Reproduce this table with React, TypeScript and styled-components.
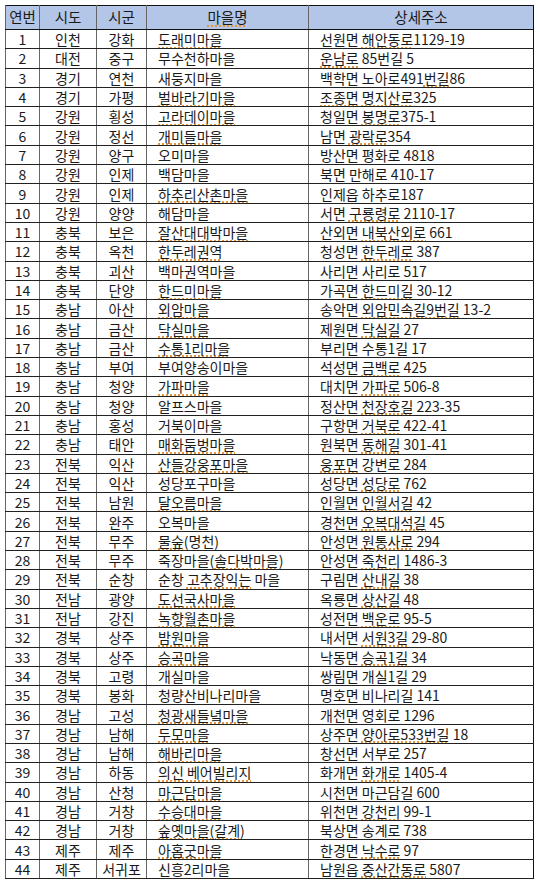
import styled, { createGlobalStyle } from "styled-components";

const GlobalStyle = createGlobalStyle`
  html, body {
    margin: 0;
    padding: 0;
    background: #ffffff;
  }
  body {
    font-family: "Noto Sans CJK KR", "Noto Sans", sans-serif;
    color: #1a1a1a;
  }
`;

// [ ] 안의 글자는 맞춤법 밑줄 표시
const rows: [string, string, string, string][] = [
  ["인천", "강화", "[도래미마을]", "선원면 [해안동로]1129-19"],
  ["대전", "중구", "무수천하마을", "[운남로] 85번길 5"],
  ["경기", "연천", "새둥지마을", "백학면 노아로491[번길]86"],
  ["경기", "가평", "[벌바라기마을]", "[조종면] [명지산로]325"],
  ["강원", "횡성", "[고라데이마을]", "청일면 [봉명로]375-1"],
  ["강원", "정선", "[개미들마을]", "남면 [광락로]354"],
  ["강원", "양구", "오미마을", "방산면 평화로 4818"],
  ["강원", "인제", "백담마을", "북면 만해로 410-17"],
  ["강원", "인제", "[하추리산촌마을]", "인제읍 하추로187"],
  ["강원", "양양", "해담마을", "서면 [구룡령로] 2110-17"],
  ["충북", "보은", "[잘산대대박마을]", "산외면 [내북산외로] 661"],
  ["충북", "옥천", "[한두레권역]", "청성면 [한두레로] 387"],
  ["충북", "괴산", "백마권역마을", "사리면 사리로 517"],
  ["충북", "단양", "[한드미마을]", "가곡면 [한드미길] 30-12"],
  ["충남", "아산", "[외암마을]", "송악면 [외암민속길9번길] 13-2"],
  ["충남", "금산", "[닥실마을]", "제원면 [닥실길] 27"],
  ["충남", "금산", "[수통1리마을]", "부리면 수통1길 17"],
  ["충남", "부여", "부여양송이마을", "석성면 [금백로] 425"],
  ["충남", "청양", "[가파마을]", "대치면 [가파로] 506-8"],
  ["충남", "청양", "알프스마을", "정산면 [천장호길] 223-35"],
  ["충남", "홍성", "거북이마을", "구항면 [거북로] 422-41"],
  ["충남", "태안", "[매화둠벙마을]", "원북면 [동해길] 301-41"],
  ["전북", "익산", "[산들강웅포마을]", "[웅포면] 강변로 284"],
  ["전북", "익산", "성당포구마을", "성당면 [성당로] 762"],
  ["전북", "남원", "[달오름마을]", "인월면 [인월서길] 42"],
  ["전북", "완주", "오복마을", "경천면 [오복대석길] 45"],
  ["전북", "무주", "[물숲](명천)", "안성면 [원통사로] 294"],
  ["전북", "무주", "죽장마을([솔다박마을])", "안성면 [죽천리] 1486-3"],
  ["전북", "순창", "순창 [고추장익는] 마을", "구림면 [산내길] 38"],
  ["전남", "광양", "[도선국사마을]", "옥룡면 [상산길] 48"],
  ["전남", "강진", "[녹향월촌마을]", "성전면 [백운로] 95-5"],
  ["경북", "상주", "[밤원마을]", "내서면 [서원3길] 29-80"],
  ["경북", "상주", "[승곡마을]", "낙동면 [승곡1길] 34"],
  ["경북", "고령", "개실마을", "쌍림면 개실1길 29"],
  ["경북", "봉화", "청량산비나리마을", "명호면 비나리길 141"],
  ["경남", "고성", "[청광새들녘마을]", "개천면 영회로 1296"],
  ["경남", "남해", "[두모마을]", "상주면 [양아로533번길] 18"],
  ["경남", "남해", "[해바리마을]", "창선면 서부로 257"],
  ["경남", "하동", "[의신 베어빌리지]", "화개면 [화개로] 1405-4"],
  ["경남", "산청", "[마근담마을]", "시천면 마근담길 600"],
  ["경남", "거창", "[수승대마을]", "위천면 [강천리] 99-1"],
  ["경남", "거창", "[숲옛마을(갈계)]", "북상면 송계로 738"],
  ["제주", "제주", "[아홉굿마을]", "한경면 [낙수로] 97"],
  ["제주", "서귀포", "신흥2리마을", "남원읍 [중산간동로] 5807"],
];

const renderMarked = (text: string) =>
  text.split(/(\[[^\]]+\])/).map((part, i) =>
    part.startsWith("[") ? (
      <Squiggle key={i}>{part.slice(1, -1)}</Squiggle>
    ) : (
      <span key={i}>{part}</span>
    )
  );

const App = () => {
  return (
    <Page>
      <GlobalStyle />
      <Sheet>
        <colgroup>
          <col style={{ width: 34 }} />
          <col style={{ width: 57 }} />
          <col style={{ width: 50 }} />
          <col style={{ width: 162 }} />
          <col style={{ width: 225 }} />
        </colgroup>
        <thead>
          <HeadRow>
            <HeadCell>연번</HeadCell>
            <HeadCell>시도</HeadCell>
            <HeadCell>시군</HeadCell>
            <HeadCell>
              <Squiggle>마을명</Squiggle>
            </HeadCell>
            <HeadCell>상세주소</HeadCell>
          </HeadRow>
        </thead>
        <tbody>
          {rows.map(([sido, sigun, name, addr], i) => (
            <BodyRow key={i}>
              <Cell $align="center">{i + 1}</Cell>
              <Cell $align="center">{sido}</Cell>
              <Cell $align="center">{sigun}</Cell>
              <Cell $align="left">{renderMarked(name)}</Cell>
              <Cell $align="left">{renderMarked(addr)}</Cell>
            </BodyRow>
          ))}
        </tbody>
      </Sheet>
    </Page>
  );
};

export default App;

const Page = styled.div`
  padding: 5px 0 0 5px;
  width: 540px;
  box-sizing: border-box;
`;

const Sheet = styled.table`
  border-collapse: collapse;
  table-layout: fixed;
  width: 528px;
  border: 1.5px solid #111111;
`;

const HeadRow = styled.tr`
  height: 24px;
  background: #b4c6e7;
`;

const HeadCell = styled.th`
  font-weight: 400;
  font-size: 14.5px;
  line-height: 1;
  text-align: center;
  padding: 0;
  border-left: 1px solid #666666;
  border-bottom: 1px solid #111111;
  white-space: nowrap;
`;

const BodyRow = styled.tr`
  height: 19.3px;
`;

const Cell = styled.td<{ $align: "left" | "center" }>`
  font-size: 14px;
  line-height: 1;
  padding: ${(p) => (p.$align === "left" ? "0 0 0 11px" : "0")};
  text-align: ${(p) => p.$align};
  border-left: 1px solid #666666;
  border-bottom: 1px solid #222222;
  white-space: nowrap;
  overflow: hidden;
`;

const Squiggle = styled.span`
  text-decoration-line: underline;
  text-decoration-style: dotted;
  text-decoration-color: #e3963e;
  text-decoration-thickness: 1.5px;
  text-underline-offset: 2px;
`;
